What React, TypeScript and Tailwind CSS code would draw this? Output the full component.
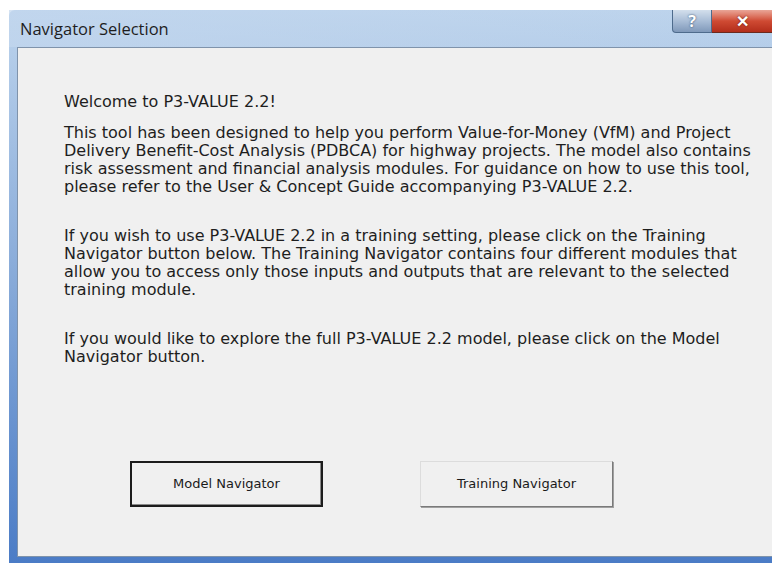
import React from "react";

const intro = "Welcome to P3-VALUE 2.2!";

const paragraphs: string[][] = [
  [
    "This tool has been designed to help you perform Value-for-Money (VfM) and Project",
    "Delivery Benefit-Cost Analysis (PDBCA) for highway projects. The model also contains",
    "risk assessment and financial analysis modules. For guidance on how to use this tool,",
    "please refer to the User & Concept Guide accompanying P3-VALUE 2.2.",
  ],
  [
    "If you wish to use P3-VALUE 2.2 in a training setting, please click on the Training",
    "Navigator button below. The Training Navigator contains four different modules that",
    "allow you to access only those inputs and outputs that are relevant to the selected",
    "training module.",
  ],
  [
    "If you would like to explore the full P3-VALUE 2.2 model, please click on the Model",
    "Navigator button.",
  ],
];

function CaptionButtons() {
  return (
    <div className="flex h-[23px] self-start">
      <div className="flex w-[40px] items-center justify-center rounded-bl-[4px] border border-t-0 border-[#4e6b8c] bg-gradient-to-b from-[#d3dfec] via-[#a9bdd6] to-[#8099ba] text-[16px] font-bold text-white [text-shadow:0_0_2px_#1f3b5e]">
        ?
      </div>
      <div className="flex w-[60px] items-center justify-center border-b border-[#6b2a1e] bg-gradient-to-b from-[#e9a597] via-[#cf4a33] to-[#b32d1a] text-[16px] font-bold text-white [text-shadow:0_0_2px_#5a1208]">
        ✕
      </div>
    </div>
  );
}

function DialogButton({ label, focused }: { label: string; focused?: boolean }) {
  return (
    <button
      className={`h-[46px] w-[193px] bg-[#f0f0f0] text-[13px] text-[#1a1a1a] ${
        focused
          ? "border-2 border-[#1c1c1c] shadow-[inset_-1px_-1px_0_#8a8a8a]"
          : "border border-[#dcdcdc] border-b-[#7a7a7a] border-r-[#7a7a7a] shadow-[1px_1px_0_#a0a0a0]"
      }`}
      style={{ fontFamily: "'DejaVu Sans', sans-serif" }}
    >
      {label}
    </button>
  );
}

export default function App() {
  return (
    <div className="h-[563px] w-[772px] overflow-hidden bg-white pl-[9px] pt-[10px]">
      <div className="flex h-[553px] w-[800px] flex-col rounded-tl-[6px] bg-gradient-to-b from-[#bcd3ec] via-[#86a9d8] to-[#4b7cc6]">
        {/* title bar */}
        <div className="flex h-[37px] items-start justify-between bg-gradient-to-r from-[#c3d7ee]/70 to-transparent pl-[11px] pr-[37px]">
          <span
            className="mt-[7px] text-[16.5px] text-[#1e1e1e]"
            style={{ fontFamily: "'Open Sans', 'Noto Sans', sans-serif" }}
          >
            Navigator Selection
          </span>
          <CaptionButtons />
        </div>
        {/* client area */}
        <div className="flex flex-1 px-[8px] pb-[6px]">
          <div
            className="flex flex-1 flex-col border border-[#7f93ab] bg-[#f0f0f0] pl-[46px] pt-[45px] text-[16px] leading-[18px] text-[#1e1e1e]"
            style={{ fontFamily: "'DejaVu Sans', sans-serif" }}
          >
            <p className="whitespace-nowrap">{intro}</p>
            {paragraphs.map((lines, i) => (
              <p key={i} className={`${i === 0 ? "mt-[13px]" : "mt-[31px]"} whitespace-nowrap`}>
                {lines.map((line) => (
                  <span key={line} className="block">
                    {line}
                  </span>
                ))}
              </p>
            ))}
            <div className="mt-[95px] flex gap-[97px] pl-[66px]">
              <DialogButton label="Model Navigator" focused />
              <DialogButton label="Training Navigator" />
            </div>
          </div>
        </div>
      </div>
    </div>
  );
}
